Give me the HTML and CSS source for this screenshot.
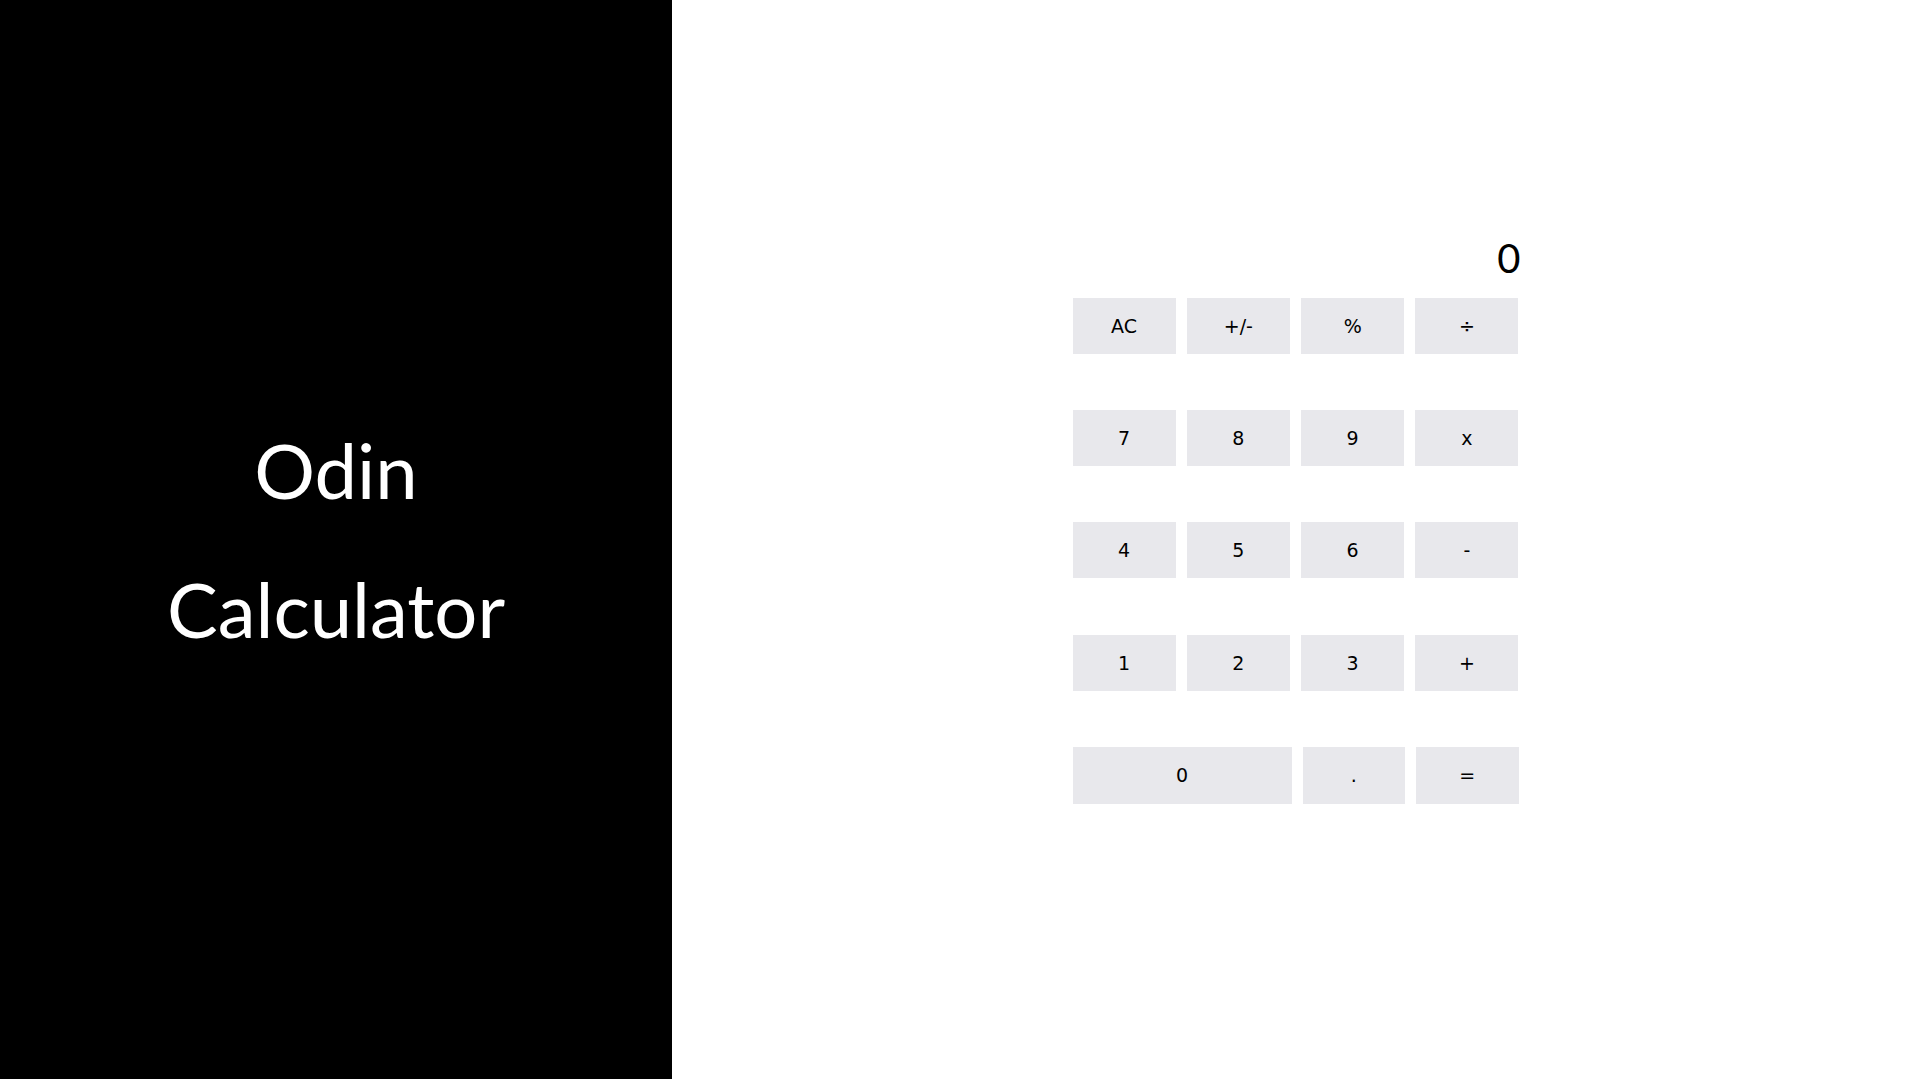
FILE: index.html
```html
<!DOCTYPE html>
<html lang="en">
<head>
<meta charset="utf-8">
<title>Odin Calculator</title>
<link rel="stylesheet" href="styles.css">
</head>
<body>
<div class="page">
  <aside class="side">
    <div class="title">
      <div class="title-line">Odin</div>
      <div class="title-line">Calculator</div>
    </div>
  </aside>
  <main class="main">
    <div class="calc">
      <div class="display">0</div>
      <div class="keys">
        <div class="row">
          <button class="key">AC</button>
          <button class="key">+/-</button>
          <button class="key">%</button>
          <button class="key">÷</button>
        </div>
        <div class="row">
          <button class="key">7</button>
          <button class="key">8</button>
          <button class="key">9</button>
          <button class="key">x</button>
        </div>
        <div class="row">
          <button class="key">4</button>
          <button class="key">5</button>
          <button class="key">6</button>
          <button class="key">-</button>
        </div>
        <div class="row">
          <button class="key">1</button>
          <button class="key">2</button>
          <button class="key">3</button>
          <button class="key">+</button>
        </div>
        <div class="row last">
          <button class="key zero">0</button>
          <button class="key">.</button>
          <button class="key">=</button>
        </div>
      </div>
    </div>
  </main>
</div>
</body>
</html>
```
FILE: styles.css
```css
html, body {
  margin: 0;
  padding: 0;
  height: 100%;
}
body {
  background: #ffffff;
  font-family: "DejaVu Sans", "Liberation Sans", sans-serif;
}
.page {
  display: flex;
  height: 100vh;
}
.side {
  width: 672px;
  flex: 0 0 672px;
  background: #000000;
  display: flex;
  align-items: center;
  justify-content: center;
}
.title {
  display: flex;
  flex-direction: column;
  align-items: center;
  gap: 47.8px;
  color: #ffffff;
  font-family: Lato, "Liberation Sans", sans-serif;
  font-size: 76px;
  line-height: 1.2;
}
.main {
  flex: 1;
  display: flex;
  align-items: center;
  justify-content: center;
}
.calc {
  width: 446px;
  margin-bottom: 41px;
}
.display {
  font-family: Lato, "Liberation Sans", sans-serif;
  font-size: 40px;
  line-height: 48px;
  height: 48px;
  text-align: right;
  color: #000000;
  margin-right: -2px;
  margin-bottom: 15.5px;
}
.keys {
  display: flex;
  flex-direction: column;
  gap: 56.25px;
}
.row {
  display: flex;
  gap: 11.33px;
  height: 56px;
}
.row.last {
  height: 57px;
  gap: 11px;
}
.key {
  flex: 1;
  border: none;
  margin: 0;
  padding: 0;
  background: #e8e8ec;
  color: #000000;
  font-family: "DejaVu Sans", "Liberation Sans", sans-serif;
  font-size: 19px;
}
.key.zero {
  flex: 0 0 219px;
}
```
